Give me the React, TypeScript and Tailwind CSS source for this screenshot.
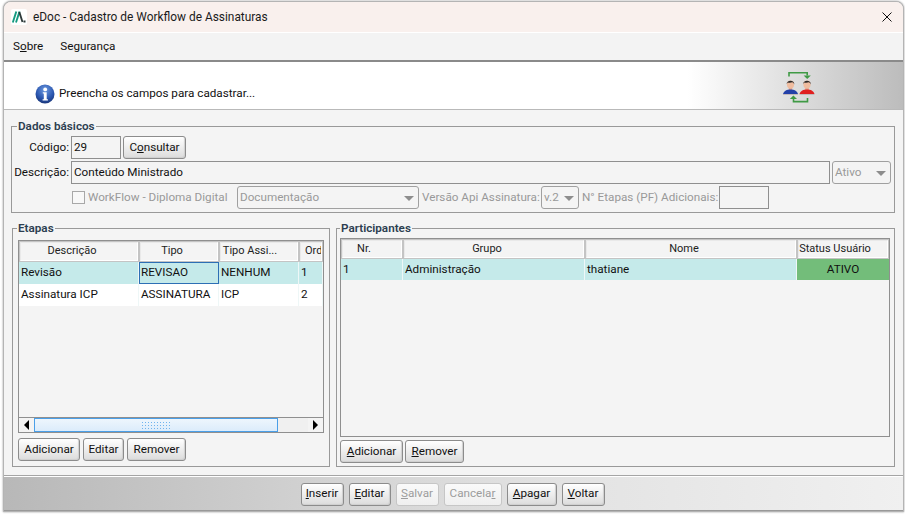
import React from 'react';

const font = 'font-["Roboto",sans-serif]';

type BtnProps = { children: React.ReactNode; w: string; disabled?: boolean };

const Btn = ({ children, w, disabled }: BtnProps) => (
  <div
    className={
      disabled
        ? `${w} h-[23px] flex items-center justify-center rounded-[3px] border border-[#c6c6c6] bg-gradient-to-b from-[#fafafa] to-[#efefef] text-[11.7px] text-[#9c9c9c]`
        : `${w} h-[23px] flex items-center justify-center rounded-[3px] border border-[#8c8c8c] bg-gradient-to-b from-[#ffffff] to-[#dcdcdc] text-[11.7px] text-[#111] shadow-[inset_-1px_-1px_1px_#cfcfcf]`
    }
  >
    <span>{children}</span>
  </div>
);

const Field = ({ w, children, disabled }: { w: string; children?: React.ReactNode; disabled?: boolean }) => (
  <div
    className={`${w} h-[23px] flex items-center px-[2px] pt-[1px] border border-[#8f8f8f] bg-[#f4f4f4] text-[11.7px] ${
      disabled ? 'text-[#999]' : 'text-[#111]'
    }`}
  >
    {children}
  </div>
);

const Combo = ({ w, label }: { w: string; label: string }) => (
  <div className={`${w} h-[23px] flex items-center justify-between pl-[2px] pr-[4px] pt-[1px] rounded-[3px] border border-[#a0a0a0] text-[11.7px] text-[#999]`}>
    <span>{label}</span>
    <span className="h-0 w-0 border-x-[5px] border-t-[5px] border-x-transparent border-t-[#8d8d8d]" />
  </div>
);

const Group = ({ title, className, children, legend = 'ml-[5px]' }: { title: string; className: string; children: React.ReactNode; legend?: string }) => (
  <fieldset className={`border border-[#999] ${className}`}>
    <legend className={`${legend} h-[16px] px-[1px] text-[11.7px] leading-[16px] font-semibold text-[#2c3e50]`}>{title}</legend>
    {children}
  </fieldset>
);

const HeadCell = ({ w, children, className = 'justify-center' }: { w: string; children: React.ReactNode; className?: string }) => (
  <div className={`${w} ${className} h-full flex items-center overflow-hidden border-2 border-t-[#e9e9e9] border-l-[#e9e9e9] border-r-[#fff] border-b-[#fff] outline outline-1 outline-[#c4c4c4] -outline-offset-1 bg-[#f4f4f4] text-[11px] text-[#222] whitespace-nowrap`}>
    {children}
  </div>
);

const Cell = ({ w, children, focused, className = '' }: { w: string; children: React.ReactNode; focused?: boolean; className?: string }) => (
  <div
    className={`${w} ${className} h-full flex items-center px-[2px] text-[11.7px] text-[#111] whitespace-nowrap overflow-hidden ${
      focused ? 'border border-[#2d6fb5] pl-[1px]' : 'border-r border-r-[#eef7f7]'
    }`}
  >
    {children}
  </div>
);

const InfoIcon = () => (
  <svg width="20" height="20" viewBox="0 0 20 20">
    <defs>
      <radialGradient id="info" cx="50%" cy="30%" r="75%">
        <stop offset="0%" stopColor="#6f9be0" />
        <stop offset="60%" stopColor="#2b57b0" />
        <stop offset="100%" stopColor="#16306f" />
      </radialGradient>
    </defs>
    <circle cx="10" cy="10" r="9.5" fill="url(#info)" />
    <circle cx="10.2" cy="5.4" r="1.9" fill="#fff" />
    <path d="M7.8 8.2h3.9v7h1.2v1.4H7.6v-1.4h1.2V9.6h-1z" fill="#fff" />
  </svg>
);

const Person = ({ x, shirt }: { x: number; shirt: string }) => (
  <g transform={`translate(${x} 0)`}>
    <rect x="5.8" y="15" width="3.4" height="4" fill="#e0a488" />
    <path d="M0 23c.8-3.4 4-4.6 7.5-4.6s6.7 1.2 7.5 4.6z" fill={shirt} />
    <rect x="0" y="23" width="15" height="1" fill="#c3b9b9" />
    <ellipse cx="7.5" cy="13.5" rx="3.6" ry="4" fill="#efbc9f" />
    <path d="M3.7 13.5c-.5-5 8.1-5 7.6 0-.6-1.5-1.3-2-2-2.2-1.5.5-3.5.5-4.5.1-.5.3-.9 1-1.1 2.1z" fill="#2a2a2a" />
  </g>
);

const PeopleIcon = () => (
  <svg width="32" height="32" viewBox="0 0 32 32" className="mb-[1px]">
    <path d="M6 5.5V1.8h18.2V4.5" fill="none" stroke="#3f9a45" strokeWidth="1.6" />
    <path d="M20.6 4.5h7.200L24.200 8z" fill="#3f9a45" />
    <path d="M24.500 27v3.600H10.500V28" fill="none" stroke="#3f9a45" strokeWidth="1.6" />
    <path d="M14 28H6.800l3.600-3.500z" fill="#3f9a45" />
    <Person x={0} shirt="#2340a8" />
    <Person x={16.5} shirt="#e02020" />
  </svg>
);

const Logo = () => (
  <svg width="16" height="16" viewBox="0 0 16 16" className="rounded-[2px] bg-white">
    <path d="M1.8 13.5 5.3 2.5" stroke="#149a80" strokeWidth="1.9" fill="none" />
    <path d="M5 13.5 8.5 2.5" stroke="#149a80" strokeWidth="1.9" fill="none" />
    <path d="M8.3 3 11.5 13" stroke="#2e3a3a" strokeWidth="1.9" fill="none" />
    <rect x="12.5" y="11.5" width="2" height="2" fill="#2e3a3a" />
  </svg>
);

const ScrollArrow = ({ left }: { left?: boolean }) => (
  <div className="flex h-full w-[15px] items-center justify-center bg-[#f4f4f4]">
    <span className={left ? 'h-0 w-0 border-y-[5px] border-r-[5px] border-y-transparent border-r-black' : 'h-0 w-0 border-y-[5px] border-l-[5px] border-y-transparent border-l-black'} />
  </div>
);

export default function App() {
  return (
    <div className={`h-[514px] w-[905px] overflow-hidden bg-white pl-[3px] pr-[1px] pt-[1px] ${font}`}>
      <div className="flex h-[511px] w-[901px] flex-col overflow-hidden rounded-t-[8px] border border-[#b4b4b4] bg-[#f4f4f4] shadow-[0_0_2px_#888]">
        {/* title bar */}
        <div className="flex h-[30px] shrink-0 items-center bg-[#f9f0ed] pl-[7px] pr-[11px]">
          <Logo />
          <span className="ml-[6px] pt-[1px] text-[11.9px] text-[#1b1b1b]">eDoc - Cadastro de Workflow de Assinaturas</span>
          <svg width="10" height="10" viewBox="0 0 10 10" className="ml-auto">
            <path d="M.5.5l9 9M9.5.5l-9 9" stroke="#111" strokeWidth="1" fill="none" />
          </svg>
        </div>

        {/* menu */}
        <div className="flex h-[30px] shrink-0 items-center gap-[17px] border-t border-t-white border-b-2 border-b-[#8a8a8a] bg-[#f3f3f3] pl-[9px] pt-[1px] text-[11.7px] text-[#111]">
          <span>S<u>o</u>bre</span>
          <span>Segurança</span>
        </div>

        {/* info header */}
        <div className="flex h-[48px] shrink-0 items-end justify-between border-b border-b-[#b9b9b9] bg-[linear-gradient(to_right,#fff_76%,#bcbcbc_100%)] pb-[5px] pl-[31px] pr-[88px]">
          <div className="flex items-center gap-[4px] text-[11.7px] text-[#111]">
            <InfoIcon />
            <span>Preencha os campos para cadastrar...</span>
          </div>
          <PeopleIcon />
        </div>

        {/* content */}
        <div className="flex flex-1 flex-col pl-[7px] pr-[8px]">
          <Group title="Dados básicos" className="mt-[8px] h-[95px]">
            <div className="flex flex-col gap-[2px] pt-[2px]">
              <div className="flex items-center gap-[2px]">
                <span className="w-[57px] pt-[1px] text-right text-[11.7px] text-[#111]">Código:</span>
                <Field w="w-[50px]">29</Field>
                <Btn w="w-[63px]">C<u>o</u>nsultar</Btn>
              </div>
              <div className="flex items-center gap-[2px]">
                <span className="w-[57px] pt-[1px] text-right text-[11.7px] text-[#111]">Descrição:</span>
                <Field w="w-[759px]">Conteúdo Ministrado</Field>
                <Combo w="w-[59px]" label="Ativo" />
              </div>
              <div className="flex items-center text-[11.7px] text-[#999]">
                <span className="ml-[60px] h-[13px] w-[13px] border border-[#a8a8a8] bg-[#f8f8f8]" />
                <span className="ml-[3px] w-[149px] pt-[1px] whitespace-nowrap">WorkFlow - Diploma Digital</span>
                <Combo w="w-[182px]" label="Documentação" />
                <span className="ml-[3px] w-[119px] pt-[1px] whitespace-nowrap">Versão Api Assinatura:</span>
                <Combo w="w-[38px]" label="v.2" />
                <span className="ml-[3px] w-[137px] pt-[1px] whitespace-nowrap">N° Etapas (PF) Adicionais:</span>
                <Field w="w-[50px]" disabled />
              </div>
            </div>
          </Group>

          <div className="mt-[7px] flex gap-[6px]">
            <Group title="Etapas" className="ml-[1px] h-[247px] w-[318px] pl-[5px] pr-[5px]" legend="-ml-[1px]">
              <div className="flex flex-col pt-[4px]">
                <div className="flex h-[193px] flex-col border border-[#8f8f8f] bg-[#f4f4f4]">
                  <div className="flex h-[21px] shrink-0">
                    <HeadCell w="w-[120px]" className="justify-center pr-[14px]">Descrição</HeadCell>
                    <HeadCell w="w-[80px]" className="justify-center pr-[14px]">Tipo</HeadCell>
                    <HeadCell w="w-[80px]" className="justify-center pr-[18px]">Tipo Assi...</HeadCell>
                    <HeadCell w="w-[24px]" className="justify-start pl-[4px]">Ord</HeadCell>
                  </div>
                  <div className="flex h-[22px] shrink-0 bg-[#c5eaea]">
                    <Cell w="w-[120px]">Revisão</Cell>
                    <Cell w="w-[80px]" focused>REVISAO</Cell>
                    <Cell w="w-[80px]">NENHUM</Cell>
                    <Cell w="w-[24px]">1</Cell>
                  </div>
                  <div className="flex h-[22px] shrink-0 bg-white">
                    <Cell w="w-[120px]">Assinatura ICP</Cell>
                    <Cell w="w-[80px]">ASSINATURA</Cell>
                    <Cell w="w-[80px]">ICP</Cell>
                    <Cell w="w-[24px]">2</Cell>
                  </div>
                  <div className="flex-1" />
                  <div className="flex h-[15px] shrink-0 border-t border-[#8f8f8f]">
                    <ScrollArrow left />
                    <div className="flex w-[244px] items-center justify-center border border-[#4a9fe8] bg-gradient-to-b from-[#eef6fd] to-[#dcecfb]">
                      <span className="h-[8px] w-[30px] bg-[radial-gradient(#6fb4ee_1px,transparent_1px)] bg-[length:3px_3px]" />
                    </div>
                    <div className="flex-1 bg-[#f0f0f0]" />
                    <ScrollArrow />
                  </div>
                </div>
                <div className="mt-[5px] flex gap-[3px]">
                  <Btn w="w-[62px]">Adicionar</Btn>
                  <Btn w="w-[41px]">Editar</Btn>
                  <Btn w="w-[59px]">Remover</Btn>
                </div>
              </div>
            </Group>

            <Group title="Participantes" className="h-[247px] w-[559px] pl-[3px] pr-[4px]" legend="ml-0">
              <div className="flex flex-col pt-[2px]">
                <div className="flex h-[199px] flex-col border border-[#8f8f8f] bg-[#f4f4f4]">
                  <div className="flex h-[20px] shrink-0">
                    <HeadCell w="w-[62px]" className="justify-center pr-[16px] pt-[1px]">Nr.</HeadCell>
                    <HeadCell w="w-[182px]" className="justify-center pr-[14px] pt-[1px]">Grupo</HeadCell>
                    <HeadCell w="w-[212px]" className="justify-center pr-[14px] pt-[1px]">Nome</HeadCell>
                    <HeadCell w="w-[92px]" className="justify-center pr-[16px] pt-[1px]">Status Usuário</HeadCell>
                  </div>
                  <div className="flex h-[21px] shrink-0 bg-[#c5eaea]">
                    <Cell w="w-[62px]" className="pt-[1px]">1</Cell>
                    <Cell w="w-[182px]" className="pt-[1px]">Administração</Cell>
                    <Cell w="w-[212px]" className="pt-[1px]">thatiane</Cell>
                    <div className="flex h-full w-[92px] items-center justify-center bg-[#73bd7a] pt-[1px] text-[11.7px] text-[#111]">ATIVO</div>
                  </div>
                </div>
                <div className="mt-[3px] flex gap-[2px]">
                  <Btn w="w-[63px]"><u>A</u>dicionar</Btn>
                  <Btn w="w-[59px]"><u>R</u>emover</Btn>
                </div>
              </div>
            </Group>
          </div>
        </div>

        {/* footer */}
        <div className="flex h-[36px] shrink-0 items-center justify-center border-t border-t-[#a5a5a5] border-b border-b-[#999] bg-[linear-gradient(to_right,#b8b8b8_0%,#d2d2d2_35%,#e2e2e2_60%,#f0f0f0_100%)] pr-[2px] pt-[2px] shadow-[inset_0_1px_0_#fff]">
          <div className="flex gap-[5px]">
            <Btn w="w-[43px]"><u>I</u>nserir</Btn>
            <Btn w="w-[42px]"><u>E</u>ditar</Btn>
            <Btn w="w-[43px]" disabled><u>S</u>alvar</Btn>
            <Btn w="w-[58px]" disabled>Cancela<u>r</u></Btn>
            <Btn w="w-[50px]"><u>A</u>pagar</Btn>
            <Btn w="w-[43px]"><u>V</u>oltar</Btn>
          </div>
        </div>
      </div>
    </div>
  );
}
